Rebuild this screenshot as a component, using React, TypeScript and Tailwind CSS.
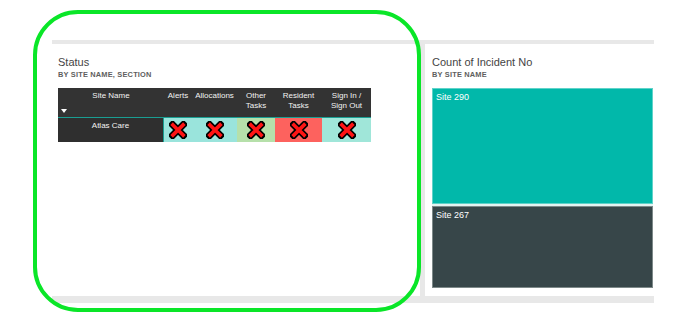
import React from "react";

function XMark() {
  return (
    <svg width="18" height="18" viewBox="0 0 18 18">
      <path d="M3.6 3.6 L14.4 14.4 M14.4 3.6 L3.6 14.4" stroke="#000" strokeWidth="7" strokeLinecap="square" />
      <path d="M3.9 3.9 L14.1 14.1 M14.1 3.9 L3.9 14.1" stroke="#ff1414" strokeWidth="3.6" strokeLinecap="square" />
    </svg>
  );
}

const cols = [
  { label: ["Alerts"], w: "w-[28px]", bg: "bg-[#9ae4dc]" },
  { label: ["Allocations"], w: "w-[45px]", bg: "bg-[#9ae4dc]" },
  { label: ["Other", "Tasks"], w: "w-[38px]", bg: "bg-[#b6e0aa]" },
  { label: ["Resident", "Tasks"], w: "w-[47px]", bg: "bg-[#fd625e]" },
  { label: ["Sign In /", "Sign Out"], w: "w-[49px]", bg: "bg-[#a0e6d9]" },
];

export default function App() {
  return (
    <div
      className="relative w-[685px] h-[325px] bg-white overflow-hidden"
      style={{ fontFamily: '"Liberation Sans", Arial, sans-serif' }}
    >
      <div className="ml-[52px] mt-[40px] w-[602px] h-[263px] bg-[#e8e8e8] pt-[4px] pb-[7px] flex gap-[5px]">
        {/* Left panel */}
        <div className="w-[368px] h-full bg-white pl-[6px] pt-[12px]">
          <div className="text-[11px] leading-[13px] text-[#444]">Status</div>
          <div className="text-[7.4px] leading-[9px] mt-[1px] tracking-[0.2px] text-[#5e5e5e] font-bold">
            BY SITE NAME, SECTION
          </div>
          <div className="mt-[9px] w-[313px] text-[8px] text-[#f2f2f2]">
            {/* header */}
            <div className="flex h-[29px] bg-[#333333]">
              <div className="relative w-[106px] text-center pt-[3px] leading-[10px]">
                Site Name
                <div className="absolute left-[3px] top-[21px] w-0 h-0 border-l-[3px] border-r-[3px] border-t-[4px] border-l-transparent border-r-transparent border-t-white" />
              </div>
              {cols.map((c, i) => (
                <div key={i} className={`${c.w} text-center pt-[3px] leading-[10px]`}>
                  {c.label.map((l, j) => (
                    <div key={j} className="whitespace-nowrap">{l}</div>
                  ))}
                </div>
              ))}
            </div>
            <div className="h-[1px] bg-[#1a9e92]" />
            {/* data row */}
            <div className="flex h-[24px]">
              <div className="w-[105px] bg-[#2f2f2f] text-center pt-[3px] leading-[10px] border-r border-[#1a9e92] box-content">
                Atlas Care
              </div>
              {cols.map((c, i) => (
                <div key={i} className={`${c.w} ${c.bg} flex items-center justify-center`}>
                  <XMark />
                </div>
              ))}
            </div>
          </div>
        </div>
        {/* Right panel */}
        <div className="w-[229px] h-full bg-white pl-[7px] pr-[1px] pt-[12px] pb-[8px] flex flex-col">
          <div className="text-[11px] leading-[13px] text-[#444]">Count of Incident No</div>
          <div className="text-[7.4px] leading-[9px] mt-[1px] tracking-[0.2px] text-[#5e5e5e] font-bold">BY SITE NAME</div>
          <div className="mt-[9px] flex-1 flex flex-col">
            <div className="h-[116px] bg-[#01b8aa] border border-[#5fd3c9] text-white text-[9px] leading-[11px] pl-[3px] pt-[3px]">
              Site 290
            </div>
            <div className="h-[2px] bg-[#e4f3f1]" />
            <div className="flex-1 bg-[#374649] border border-[#7d8989] text-white text-[9px] leading-[11px] pl-[3px] pt-[3px]">
              Site 267
            </div>
          </div>
        </div>
      </div>
      {/* green annotation */}
      <div className="absolute left-[33px] top-[10px] w-[388px] h-[302px] border-[4px] border-[#0ae628] rounded-[45px] pointer-events-none" />
    </div>
  );
}
